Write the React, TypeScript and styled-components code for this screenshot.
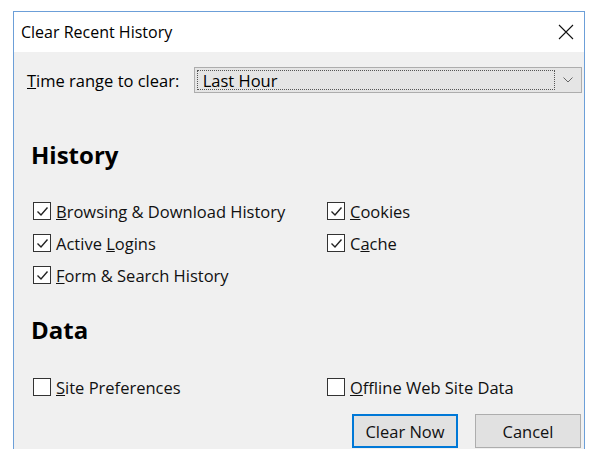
import React from 'react'
import styled, { createGlobalStyle } from 'styled-components'

const GlobalStyle = createGlobalStyle`
  html, body {
    margin: 0;
    padding: 0;
    background: #ffffff;
  }
  body {
    font-family: "Open Sans", "Noto Sans", sans-serif;
    color: #000;
  }
`

interface CheckProps {
  label: string
  hotkey: number
  checked?: boolean
}

// label with its access key underlined, windows style
const Mnemonic: React.FC<{ text: string; at: number }> = ({ text, at }) => (
  <>
    {text.slice(0, at)}
    <u>{text.charAt(at)}</u>
    {text.slice(at + 1)}
  </>
)

const CheckItem: React.FC<CheckProps> = ({ label, hotkey, checked }) => (
  <CheckRow>
    <Box>
      {checked && (
        <svg width="13" height="11" viewBox="0 0 13 11">
          <path d="M1.5 5.5 L5 9 L11.5 1.5" fill="none" stroke="#222" strokeWidth="1.4" />
        </svg>
      )}
    </Box>
    <span>
      <Mnemonic text={label} at={hotkey} />
    </span>
  </CheckRow>
)

const App: React.FC = () => {
  return (
    <>
      <GlobalStyle />
      <Window>
        <TitleBar>
          <Title>Clear Recent History</Title>
          <CloseButton>
            <svg width="16" height="16" viewBox="0 0 16 16">
              <path d="M1 1 L15 15 M15 1 L1 15" stroke="#111" strokeWidth="1.1" />
            </svg>
          </CloseButton>
        </TitleBar>
        <Body>
          <RangeRow>
            <RangeLabel>
              <Mnemonic text="Time range to clear:" at={0} />
            </RangeLabel>
            <Select>
              <SelectValue>Last Hour</SelectValue>
              <SelectArrow>
                <svg width="10" height="6" viewBox="0 0 10 6">
                  <path d="M0.5 0.5 L5 5 L9.5 0.5" fill="none" stroke="#666" strokeWidth="1" />
                </svg>
              </SelectArrow>
            </Select>
          </RangeRow>

          <Heading>History</Heading>
          <CheckGrid>
            <CheckItem label="Browsing & Download History" hotkey={0} checked />
            <CheckItem label="Cookies" hotkey={0} checked />
            <CheckItem label="Active Logins" hotkey={7} checked />
            <CheckItem label="Cache" hotkey={1} checked />
            <CheckItem label="Form & Search History" hotkey={0} checked />
          </CheckGrid>

          <DataHeading>Data</DataHeading>
          <DataGrid>
            <CheckItem label="Site Preferences" hotkey={0} />
            <CheckItem label="Offline Web Site Data" hotkey={0} />
          </DataGrid>

          <ButtonRow>
            <DialogButton $primary>Clear Now</DialogButton>
            <DialogButton>Cancel</DialogButton>
          </ButtonRow>
        </Body>
      </Window>
    </>
  )
}

const Window = styled.div`
  margin: 11px 0 0 13px;
  width: 570px;
  height: 440px;
  border: 1px solid #6c9fd8;
  border-bottom: none;
  overflow: hidden;
  display: flex;
  flex-direction: column;
`

const TitleBar = styled.div`
  height: 40px;
  background: #fff;
  display: flex;
  align-items: center;
  justify-content: space-between;
  padding: 0 2px 0 7px;
`

const Title = styled.div`
  font-size: 16px;
  color: #000;
`

const CloseButton = styled.div`
  width: 32px;
  display: flex;
  justify-content: center;
`

const Body = styled.div`
  flex: 1;
  background: #f0f0f0;
  padding: 15px 2px 0 13px;
  font-size: 16.5px;
`

const RangeRow = styled.div`
  display: flex;
  align-items: center;
`

const RangeLabel = styled.div`
  width: 167px;
`

const Select = styled.div`
  width: 387px;
  height: 24px;
  border: 1px solid #adadad;
  background: #e5e5e5;
  display: flex;
`

const SelectValue = styled.div`
  flex: 1;
  margin: 2px 0 2px 2px;
  border: 1px dotted #555;
  padding-left: 5px;
  display: flex;
  align-items: center;
`

const SelectArrow = styled.div`
  width: 26px;
  display: flex;
  align-items: center;
  justify-content: center;
`

const Heading = styled.div`
  margin: 47px 0 0 4px;
  font-size: 24px;
  line-height: 30px;
  font-weight: 700;
`

const DataHeading = styled(Heading)`
  margin-top: 24px;
`

const CheckGrid = styled.div`
  display: grid;
  grid-template-columns: 294px 1fr;
  grid-auto-rows: 32px;
  margin: 25px 0 0 6px;
`

const DataGrid = styled(CheckGrid)`
  margin-top: 26px;
`

const CheckRow = styled.label`
  display: flex;
  align-items: center;
  gap: 5px;
  color: #111;
`

const Box = styled.span`
  width: 16px;
  height: 16px;
  border: 1px solid #333;
  background: #fff;
  display: flex;
  align-items: center;
  justify-content: center;
`

const ButtonRow = styled.div`
  display: flex;
  justify-content: flex-end;
  gap: 17px;
  margin: 11px 1px 0 0;
`

const DialogButton = styled.div<{ $primary?: boolean }>`
  width: 106px;
  height: 34px;
  box-sizing: border-box;
  display: flex;
  align-items: center;
  justify-content: center;
  background: #e1e1e1;
  border: ${p => (p.$primary ? '2px solid #0078d7' : '1px solid #adadad')};
  font-size: 16.5px;
  color: #111;
`

export default App
